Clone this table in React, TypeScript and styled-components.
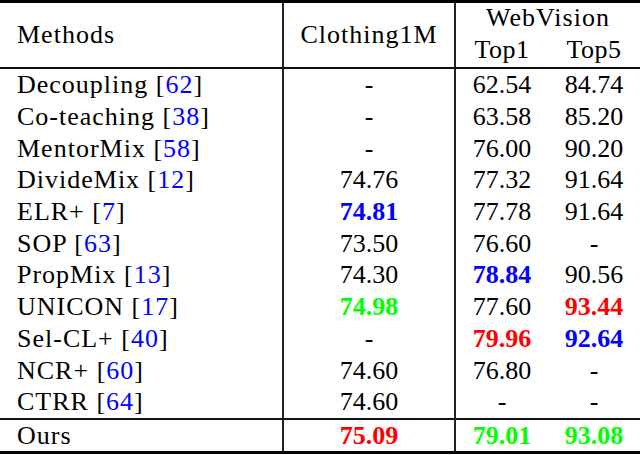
import React from 'react';
import styled, {createGlobalStyle} from 'styled-components';

type Mark = 'red' | 'green' | 'blue' | undefined;

type RowType = {
    name: string,
    ref: string,
    cloth: string,
    top1: string,
    top5: string,
    marks?: [Mark, Mark, Mark],
}

const rows: RowType[] = [
    {name: 'Decoupling', ref: '62', cloth: '-', top1: '62.54', top5: '84.74'},
    {name: 'Co-teaching', ref: '38', cloth: '-', top1: '63.58', top5: '85.20'},
    {name: 'MentorMix', ref: '58', cloth: '-', top1: '76.00', top5: '90.20'},
    {name: 'DivideMix', ref: '12', cloth: '74.76', top1: '77.32', top5: '91.64'},
    {name: 'ELR+', ref: '7', cloth: '74.81', top1: '77.78', top5: '91.64', marks: ['blue', undefined, undefined]},
    {name: 'SOP', ref: '63', cloth: '73.50', top1: '76.60', top5: '-'},
    {name: 'PropMix', ref: '13', cloth: '74.30', top1: '78.84', top5: '90.56', marks: [undefined, 'blue', undefined]},
    {name: 'UNICON', ref: '17', cloth: '74.98', top1: '77.60', top5: '93.44', marks: ['green', undefined, 'red']},
    {name: 'Sel-CL+', ref: '40', cloth: '-', top1: '79.96', top5: '92.64', marks: [undefined, 'red', 'blue']},
    {name: 'NCR+', ref: '60', cloth: '74.60', top1: '76.80', top5: '-'},
    {name: 'CTRR', ref: '64', cloth: '74.60', top1: '-', top5: '-'},
]

const markColors = {red: '#ff0000', green: '#00ff00', blue: '#0000ff'}

const GlobalStyle = createGlobalStyle`
  body {
    margin: 0;
    background: #ffffff;
    font-family: "Liberation Serif", "Times New Roman", serif;
    color: #000000;
  }
`

const Value = ({text, mark}: { text: string, mark: Mark }) =>
    <Num mark={mark}>{text}</Num>

export default function App() {
    return (
        <>
            <GlobalStyle/>
            <Table>
                <colgroup>
                    <col style={{width: 284}}/>
                    <col style={{width: 172}}/>
                    <col style={{width: 92}}/>
                    <col style={{width: 92}}/>
                </colgroup>
                <thead>
                <tr>
                    <HeadCell rowSpan={2} align={'left'} divider>Methods</HeadCell>
                    <HeadCell rowSpan={2} divider>Clothing1M</HeadCell>
                    <GroupHead colSpan={2}>WebVision</GroupHead>
                </tr>
                <tr>
                    <SubHead>Top1</SubHead>
                    <SubHead>Top5</SubHead>
                </tr>
                </thead>
                <tbody>
                {rows.map(r => (
                    <Row key={r.name}>
                        <NameCell>{r.name} [<Cite>{r.ref}</Cite>]</NameCell>
                        <Cell divider><Value text={r.cloth} mark={r.marks?.[0]}/></Cell>
                        <Cell><Value text={r.top1} mark={r.marks?.[1]}/></Cell>
                        <Cell><Value text={r.top5} mark={r.marks?.[2]}/></Cell>
                    </Row>
                ))}
                <OursRow>
                    <NameCell>Ours</NameCell>
                    <Cell divider><Value text={'75.09'} mark={'red'}/></Cell>
                    <Cell><Value text={'79.01'} mark={'green'}/></Cell>
                    <Cell><Value text={'93.08'} mark={'green'}/></Cell>
                </OursRow>
                </tbody>
            </Table>
        </>
    );
}

const Table = styled.table`
  width: 640px;
  table-layout: fixed;
  border-collapse: separate;
  border-spacing: 0;
  font-family: "Liberation Serif", "Times New Roman", serif;
  font-size: 26px;
  color: #000;
  border-top: 3px solid #000;
  border-bottom: 3px solid #000;
`

const HeadCell = styled.th<{ divider?: boolean, align?: string }>`
  font-weight: normal;
  height: 64px;
  padding: ${props => props.align === 'left' ? '0 0 0 17px' : '0'};
  text-align: ${props => props.align || 'center'};
  letter-spacing: 1px;
  line-height: 30px;
  vertical-align: middle;
  border-right: ${props => props.divider ? '2px solid #222' : 'none'};
  border-bottom: 2px solid #111;
`

const GroupHead = styled.th`
  font-weight: normal;
  height: 32px;
  padding: 0;
  line-height: 30px;
  letter-spacing: 1px;
  vertical-align: top;
`

const SubHead = styled.th`
  font-weight: normal;
  height: 32px;
  padding: 0;
  line-height: 30px;
  vertical-align: top;
  letter-spacing: 0.5px;
  border-bottom: 2px solid #111;
`

const Row = styled.tr`
  height: 31.7px;
`

const OursRow = styled.tr`
  height: 32px;

  td {
    border-top: 2px solid #111;
  }
`

const Cell = styled.td<{ divider?: boolean }>`
  padding: 0;
  line-height: 31px;
  text-align: center;
  white-space: nowrap;
  border-right: ${props => props.divider ? '2px solid #222' : 'none'};
`

const NameCell = styled.td`
  padding: 0 0 0 17px;
  line-height: 31px;
  letter-spacing: 1px;
  white-space: nowrap;
  border-right: 2px solid #222;
`

const Cite = styled.span`
  color: #0000ff;
`

const Num = styled.span<{ mark: Mark }>`
  color: ${props => props.mark ? markColors[props.mark] : '#000'};
  font-weight: ${props => props.mark ? 'bold' : 'normal'};
`
